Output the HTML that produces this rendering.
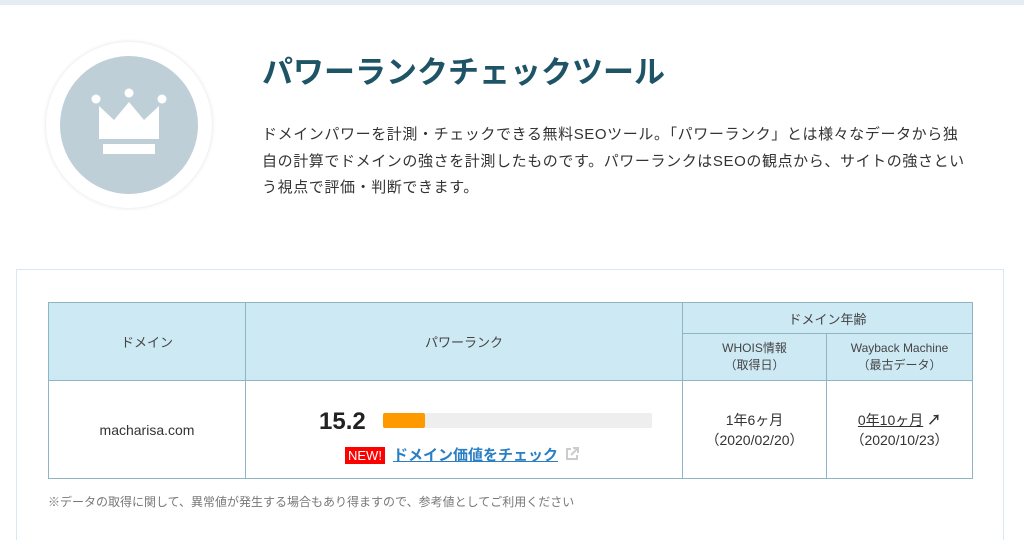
<!DOCTYPE html>
<html><head><meta charset="utf-8"><style>
body{margin:0;width:1024px;height:527px;overflow:hidden;background:#fff;font-family:"Liberation Sans","Noto Sans CJK JP",sans-serif;color:#333;position:relative}
.top{position:absolute;left:0;top:0;width:1024px;height:5px;background:#e4edf3}
.circ{position:absolute;left:46px;top:42px;width:166px;height:166px;border-radius:50%;background:#fff;box-shadow:0 0 4px rgba(0,0,0,.12)}
.inner{position:absolute;left:14px;top:14px;width:138px;height:138px;border-radius:50%;background:#bfcfd8}
h1{position:absolute;left:262px;top:47px;margin:0;font-size:31px;font-weight:bold;color:#1e5466;letter-spacing:0}
p.d{position:absolute;left:262px;top:122px;margin:0;white-space:nowrap;font-size:15px;letter-spacing:0.6px;line-height:26.5px;color:#333}
.box{position:absolute;left:16px;top:269px;width:986px;height:270px;border:1px solid #d8e8f0;border-bottom:none}
table{position:absolute;left:48px;top:302px;width:925px;border-collapse:collapse;font-size:13px;color:#333}
td,th{border:1px solid #8fb4c4;text-align:center;font-weight:normal;padding:0}
th{background:#cde9f4;color:#444}
.note{position:absolute;left:48px;top:493px;font-size:12px;color:#777}
a{color:#2a7fc4}
</style></head><body>
<div class="top"></div>
<div class="circ"><div class="inner">
<svg width="138" height="138" viewBox="0 0 138 138" style="position:absolute;left:0;top:0">
<circle cx="36" cy="43" r="4.5" fill="#fff"/><circle cx="69" cy="37" r="4.5" fill="#fff"/><circle cx="102" cy="43" r="4.5" fill="#fff"/>
<path d="M39 50 L54 64 L69 46 L84 64 L99 50 L99 83 L39 83 Z" fill="#fff"/>
<rect x="43" y="88" width="52" height="10" fill="#fff"/>
</svg></div></div>
<h1>パワーランクチェックツール</h1>
<p class="d">ドメインパワーを計測・チェックできる無料SEOツール。「パワーランク」とは様々なデータから独<br>自の計算でドメインの強さを計測したものです。パワーランクはSEOの観点から、サイトの強さとい<br>う視点で評価・判断できます。</p>
<div class="box"></div>
<table>
<tr style="height:31px"><th rowspan="2" style="width:196px">ドメイン</th><th rowspan="2" style="width:436px">パワーランク</th><th colspan="2">ドメイン年齢</th></tr>
<tr style="height:47px"><th style="width:143px;font-size:12px;line-height:17px">WHOIS情報<br>（取得日）</th><th style="font-size:12px;line-height:17px">Wayback Machine<br>（最古データ）</th></tr>
<tr style="height:97px"><td style="font-size:14px">macharisa.com</td>
<td><div style="position:relative;height:97px">
<div style="position:absolute;left:73px;top:27px;font-size:24px;font-weight:bold;color:#222">15.2</div>
<div style="position:absolute;left:137px;top:32px;width:269px;height:15px;background:#eee;border-radius:2px"><div style="width:42px;height:15px;background:#f90;border-radius:2px"></div></div>
<div style="position:absolute;left:99px;top:66px;background:#f00;color:#fff;font-size:13px;padding:1px 3px;line-height:15px">NEW!</div>
<div style="position:absolute;left:147px;top:63px;font-size:15px;font-weight:bold;white-space:nowrap"><a style="text-decoration:underline">ドメイン価値をチェック</a>
<svg width="14" height="14" viewBox="0 0 14 14" style="vertical-align:-1px;margin-left:3px"><path d="M6 2H2v10h10V8" fill="none" stroke="#ccc" stroke-width="2"/><path d="M8 1h5v5M13 1L6 8" fill="none" stroke="#ccc" stroke-width="2"/></svg></div>
</div></td>
<td style="font-size:14px;line-height:20px">1年6ヶ月<br>（2020/02/20）</td>
<td style="font-size:14px;line-height:20px"><a style="color:#333;text-decoration:underline">0年10ヶ月</a> <b>↗</b><br>（2020/10/23）</td></tr>
</table>
<div class="note">※データの取得に関して、異常値が発生する場合もあり得ますので、参考値としてご利用ください</div>
</body></html>
